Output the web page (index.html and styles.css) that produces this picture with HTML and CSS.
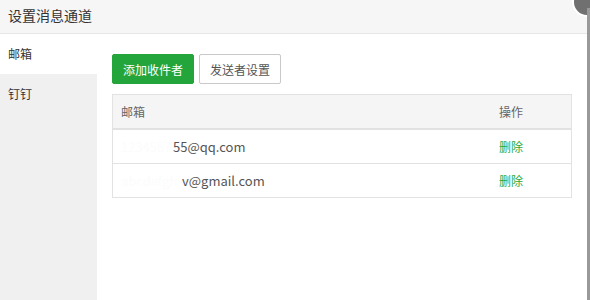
FILE: index.html
```html
<!DOCTYPE html>
<html>
<head>
    <title>设置消息通道</title>
    <link rel="stylesheet" href="styles.css">
</head>
<body>
    <div class="layer">
        <div class="layer-title">设置消息通道</div>
        <div class="layer-body">
            <ul class="tabs">
                <li class="tab active">邮箱</li>
                <li class="tab">钉钉</li>
            </ul>
            <div class="tab-content">
                <div class="toolbar">
                    <button class="btn btn-green">添加收件者</button>
                    <button class="btn btn-default">发送者设置</button>
                </div>
                <table class="mail-table">
                    <thead>
                        <tr>
                            <th>邮箱</th>
                            <th class="col-op">操作</th>
                        </tr>
                    </thead>
                    <tbody>
                        <tr>
                            <td><span class="masked m1">1234567</span>55@qq.com</td>
                            <td class="col-op"><a class="link-del">删除</a></td>
                        </tr>
                        <tr>
                            <td><span class="masked m2">abcdefgh</span>v@gmail.com</td>
                            <td class="col-op"><a class="link-del">删除</a></td>
                        </tr>
                    </tbody>
                </table>
            </div>
        </div>
        <span class="layer-close"></span>
        <span class="layer-edge"></span>
    </div>
</body>
</html>
```
FILE: styles.css
```css
html, body {
    margin: 0;
    padding: 0;
    height: 100%;
    background: #fff;
}
body {
    font-family: "Noto Sans CJK SC", "Noto Sans", sans-serif;
    font-size: 12px;
    color: #333;
    overflow: hidden;
}
.layer {
    position: relative;
    height: 300px;
    display: flex;
    flex-direction: column;
}
.layer-title {
    height: 33px;
    line-height: 31px;
    padding-left: 8px;
    font-size: 14px;
    color: #333;
    background-color: #f6f6f6;
    border-bottom: 1px solid #e6e6e6;
}
.layer-body {
    flex: 1;
    display: flex;
}
.tabs {
    list-style: none;
    margin: 0;
    padding: 0;
    width: 97px;
    background-color: #f0f0f0;
}
.tab {
    height: 40px;
    line-height: 40px;
    padding-left: 8px;
    font-size: 12px;
    color: #333;
}
.tab.active {
    background-color: #fff;
}
.tab-content {
    flex: 1;
    padding: 20px 18px 0 15px;
}
.toolbar {
    display: flex;
    gap: 5px;
    margin-bottom: 10px;
}
.btn {
    height: 30px;
    width: 82px;
    padding: 0;
    font-family: inherit;
    font-size: 12px;
    white-space: nowrap;
    border-radius: 2px;
    cursor: pointer;
}
.btn-green {
    background-color: #23a53c;
    border: 1px solid #23a53c;
    color: #fff;
}
.btn-default {
    background-color: #fff;
    border: 1px solid #c9c9c9;
    color: #555;
}
.mail-table {
    width: 460px;
    border-collapse: collapse;
    border: 1px solid #e2e2e2;
}
.mail-table th {
    height: 33px;
    padding: 0 8px;
    text-align: left;
    font-weight: normal;
    font-size: 12px;
    color: #666;
    background-color: #f5f5f5;
    border-bottom: 2px solid #e2e2e2;
}
.mail-table td {
    height: 33px;
    padding: 0 8px;
    font-size: 13px;
    color: #555;
    border-bottom: 1px solid #e2e2e2;
}
.mail-table .col-op {
    width: 72px;
    padding: 0;
}
.masked {
    display: inline-block;
    overflow: hidden;
    vertical-align: top;
    color: #fcfcfc;
}
.masked.m1 {
    width: 52px;
}
.masked.m2 {
    width: 61px;
}
.link-del {
    color: #2aa83c;
    font-size: 12px;
    cursor: pointer;
}
.layer-close {
    position: absolute;
    top: -13px;
    right: -12px;
    width: 26px;
    height: 26px;
    border-radius: 50%;
    background-color: #707070;
    border: 2px solid #fff;
}
.layer-edge {
    position: absolute;
    top: 8px;
    right: 0;
    width: 3px;
    bottom: 0;
    background-color: #999;
}
```
